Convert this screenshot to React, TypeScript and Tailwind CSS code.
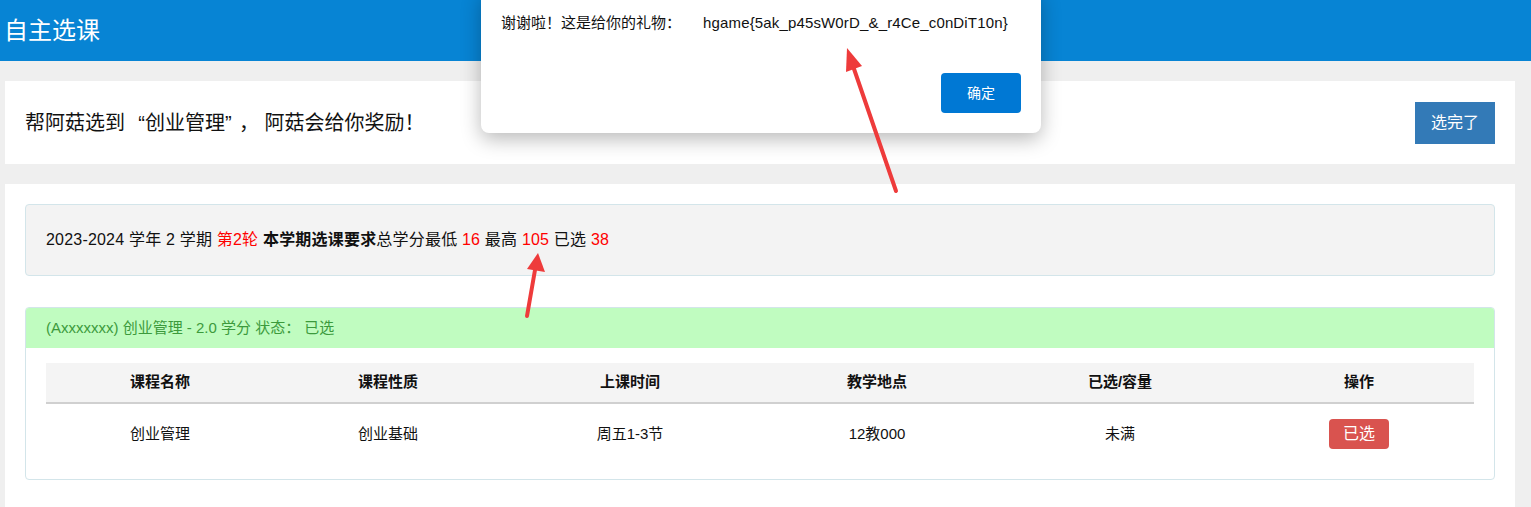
import React from "react";

const cols = ["课程名称", "课程性质", "上课时间", "教学地点", "已选/容量", "操作"];

export default function App() {
  return (
    <div className="relative min-h-[507px] overflow-hidden bg-[#efefef] font-['Liberation_Sans','Noto_Sans_CJK_SC',sans-serif] text-[#111]">
      <header className="flex h-[61px] items-center bg-[#0784d4] px-[4px] text-[24px] text-white">
        自主选课
      </header>

      <main className="flex flex-col gap-5 pb-0 pl-[5px] pr-[16px] pt-5">
        <section className="flex h-[83px] items-center justify-between bg-white px-5">
          <p className="text-[20px]">
            帮阿菇选到<span className="inline-block w-[20px] text-right">“</span>创业管理
            <span className="inline-block w-[14px] text-left">”</span>， 阿菇会给你奖励！
          </p>
          <button className="h-[42px] w-[80px] bg-[#337ab7] text-[16px] text-white">选完了</button>
        </section>

        <section className="flex flex-col gap-[31px] bg-white px-5 pb-[30px] pt-5">
          <div className="flex h-[72px] items-center rounded border border-[#d3e5ea] bg-[#f3f3f3] px-5 text-[16px]">
            <span className="tracking-[0.2px]">
              2023-2024 学年 2 学期 <span className="text-[#f00]">第2轮</span>{" "}
              <b>本学期选课要求</b>总学分最低 <span className="text-[#f00]">16</span> 最高{" "}
              <span className="text-[#f00]">105</span> 已选 <span className="text-[#f00]">38</span>
            </span>
          </div>

          <div className="overflow-hidden rounded border border-[#d3e5ea]">
            <div className="flex h-[40px] items-center bg-[#c0fcc0] px-5 text-[15px] text-[#3c9a3c]">
              (Axxxxxxx) 创业管理 - 2.0 学分 状态： 已选
            </div>
            <div className="px-5 pb-[15px] pt-[15px]">
              <table className="w-full table-fixed text-[15px]">
                <colgroup>
                  <col className="w-[228px]" />
                  <col className="w-[228px]" />
                  <col className="w-[256px]" />
                  <col className="w-[238px]" />
                  <col className="w-[248px]" />
                  <col />
                </colgroup>
                <thead>
                  <tr className="h-[40px] border-b-2 border-[#d0d0d0] bg-[#f4f4f4]">
                    {cols.map((c) => (
                      <th key={c} className="font-bold">
                        {c}
                      </th>
                    ))}
                  </tr>
                </thead>
                <tbody>
                  <tr className="h-[61px] text-center">
                    <td>创业管理</td>
                    <td>创业基础</td>
                    <td>周五1-3节</td>
                    <td>12教000</td>
                    <td>未满</td>
                    <td>
                      <button className="h-[30px] w-[60px] rounded bg-[#d9534f] text-[16px] text-white">已选</button>
                    </td>
                  </tr>
                </tbody>
              </table>
            </div>
          </div>
        </section>
      </main>

      {/* alert dialog */}
      <div className="absolute left-[481px] top-[-10px] flex h-[143px] w-[560px] flex-col justify-between rounded-lg bg-white px-5 pb-5 pt-[22px] shadow-[0_6px_20px_rgba(0,0,0,0.28)]">
        <p className="flex items-baseline">
          <span className="text-[15px]">谢谢啦！这是给你的礼物：</span>
          <span className="ml-[22px] text-[15px] tracking-[0.15px]">hgame{"{"}5ak_p45sW0rD_&amp;_r4Ce_c0nDiT10n{"}"}</span>
        </p>
        <div className="flex justify-end">
          <button className="h-[40px] w-[80px] rounded bg-[#0078d4] text-[14px] text-white">确定</button>
        </div>
      </div>

      <svg className="pointer-events-none absolute left-0 top-0" width="1531" height="507">
        <g stroke="#ee3b3b" strokeWidth="4" strokeLinecap="round" fill="#ee3b3b">
          <line x1="896" y1="191" x2="853" y2="66" />
          <line x1="527" y1="316" x2="535" y2="270" />
        </g>
        <polygon points="847,48 862,66 846,72" fill="#ee3b3b" />
        <polygon points="538,253 545,272 527,269" fill="#ee3b3b" />
      </svg>
    </div>
  );
}
